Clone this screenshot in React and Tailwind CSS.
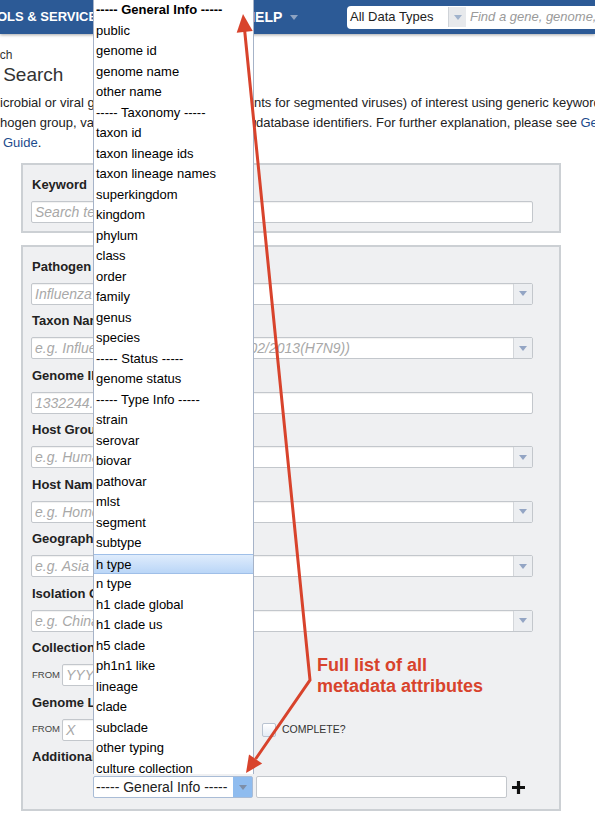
import React from "react";

const RED = "#d8432c";

const metaOptions = [
  "----- General Info -----",
  "public",
  "genome id",
  "genome name",
  "other name",
  "----- Taxonomy -----",
  "taxon id",
  "taxon lineage ids",
  "taxon lineage names",
  "superkingdom",
  "kingdom",
  "phylum",
  "class",
  "order",
  "family",
  "genus",
  "species",
  "----- Status -----",
  "genome status",
  "----- Type Info -----",
  "strain",
  "serovar",
  "biovar",
  "pathovar",
  "mlst",
  "segment",
  "subtype",
  "h type",
  "n type",
  "h1 clade global",
  "h1 clade us",
  "h5 clade",
  "ph1n1 like",
  "lineage",
  "clade",
  "subclade",
  "other typing",
  "culture collection",
  "culture collection id",
];

const fields = [
  { label: "Pathogen Group", placeholder: "Influenza A virus", arrow: true },
  {
    label: "Taxon Name",
    placeholder: "e.g. Influenza A virus (A/Shanghai/02/2013(H7N9))",
    arrow: true,
  },
  { label: "Genome ID", placeholder: "1332244.3" },
  { label: "Host Group", placeholder: "e.g. Human", arrow: true },
  { label: "Host Name", placeholder: "e.g. Homo sapiens", arrow: true },
  { label: "Geographic Group", placeholder: "e.g. Asia", arrow: true },
  { label: "Isolation Country", placeholder: "e.g. China", arrow: true },
];

function Caret({ color = "#93a5c4" }) {
  return (
    <svg width="8" height="5" viewBox="0 0 8 5">
      <path d="M0 0h8L4 5z" fill={color} />
    </svg>
  );
}

function TextBox({ placeholder, arrow, className = "w-[502px]" }) {
  return (
    <div
      className={`h-[22px] flex bg-white border border-[#c3c7cc] rounded-[2px] shadow-[inset_0_1px_1px_rgba(0,0,0,0.06)] ${className}`}
    >
      <span className="flex-1 overflow-hidden whitespace-nowrap pl-[3px] italic text-[14px] leading-[20px] text-[#a8a8a8]">
        {placeholder}
      </span>
      {arrow && (
        <span className="w-[19px] shrink-0 flex items-center justify-center bg-[#eceef1] border-l border-[#d3d6da]">
          <Caret />
        </span>
      )}
    </div>
  );
}

function Label({ children }) {
  return (
    <div className="h-[17px] leading-[17px] pl-[1px] text-[13px] font-bold text-[#222] whitespace-nowrap">
      {children}
    </div>
  );
}

function RangeRow({ from, to }) {
  return (
    <div className="flex items-center w-[231px] shrink-0">
      <span className="w-[31px] pl-[1px] text-[9.5px] text-[#444]">FROM</span>
      <TextBox placeholder={from} className="w-[70px]" />
      <span className="px-[6px] text-[9.5px] text-[#444]">TO</span>
      <TextBox placeholder={to} className="w-[70px]" />
    </div>
  );
}

function MetaList() {
  return (
    <div className="absolute left-[93px] top-0 z-10 w-[161px] h-[774px] overflow-hidden bg-white border-x border-[#a6b3c8]">
      {metaOptions.map((opt, i) => (
        <div
          key={opt}
          className={
            "h-[20.5px] leading-[20.5px] pl-[2px] text-[13px] text-black whitespace-nowrap " +
            (opt === "h type"
              ? "bg-gradient-to-b from-[#dfecfc] to-[#bad6f7] border-y border-[#9fbfe8] leading-[18.5px]"
              : "") +
            (i === 0 ? " font-bold" : "")
          }
        >
          {opt}
        </div>
      ))}
    </div>
  );
}

function Annotation() {
  return (
    <>
      <svg
        className="absolute left-0 top-0 z-20 pointer-events-none"
        width="595"
        height="819"
        viewBox="0 0 595 819"
      >
        <polyline
          points="244.7,31 310,680 255.6,759"
          fill="none"
          stroke={RED}
          strokeWidth="3"
          strokeLinejoin="miter"
        />
        <polygon points="243,14 252.7,31.1 236.7,32.7" fill={RED} />
        <polygon points="246,773 262.2,763.5 249,754.5" fill={RED} />
      </svg>
      <div
        className="absolute left-[317px] top-[655px] z-20 text-[18px] leading-[21px] font-bold text-[#d8432c]"
      >
        Full list of all
        <br />
        metadata attributes
      </div>
    </>
  );
}

export default function App() {
  return (
    <div className="relative w-[595px] h-[819px] overflow-hidden bg-white text-[#222] font-['Liberation_Sans',Arial,Helvetica,sans-serif]">
      {/* top nav */}
      <nav className="relative z-[5] h-[34px] flex items-center bg-[#2c5a96] shadow-[0_1px_3px_rgba(0,0,0,0.35)] font-['Liberation_Sans_Narrow','Arial_Narrow',sans-serif] text-white font-bold text-[14px]">
        <div className="w-[245px] shrink-0 overflow-hidden whitespace-nowrap text-[13px]">
          <span className="-ml-[3px]">OLS &amp; SERVICES</span>
        </div>
        <div className="w-[102px] shrink-0 flex items-center gap-[8px]">
          <span>HELP</span>
          <Caret color="#8ea3c2" />
        </div>
        <div className="h-[23px] w-[320px] shrink-0 flex items-center bg-white rounded-[4px] font-['Liberation_Sans',Arial,sans-serif] font-normal text-[13px]">
          <span className="w-[101px] pl-[3px] text-[#222] whitespace-nowrap">
            All Data Types
          </span>
          <span className="h-[20px] w-[18px] flex items-center justify-center bg-[#e7e9ec] border-l border-[#cfd3d8]">
            <Caret color="#9fb2cc" />
          </span>
          <span className="pl-[4px] italic text-[#9a9a9a] whitespace-nowrap">
            Find a gene, genome, feature...
          </span>
        </div>
      </nav>

      {/* page body, scrolled horizontally */}
      <main className="pt-[13px]">
        <div className="-ml-[75px] whitespace-nowrap text-[12px] leading-[16px] text-[#333]">
          Genome Search
        </div>
        <h1 className="-ml-[75px] whitespace-nowrap text-[19px] leading-[24px] text-[#333]">
          Genome Search
        </h1>
        <div className="mt-[6px] text-[13px] leading-[20px] text-[#222] whitespace-nowrap">
          <div className="flex">
            <span className="w-[254px] shrink-0 overflow-hidden">
              icrobial or viral genomes (or genome segme
            </span>
            <span>nts for segmented viruses) of interest using generic keywords,</span>
          </div>
          <div className="flex">
            <span className="w-[256px] shrink-0 overflow-hidden">
              hogen group, various metadata fields, and/or
            </span>
            <span>
              database identifiers. For further explanation, please see{" "}
              <a className="text-[#1c4b8c]">Genome Search Quick Reference</a>
            </span>
          </div>
          <div className="pl-[3px]">
            <a className="text-[#1c4b8c]">Guide</a>.
          </div>
        </div>

        {/* keyword panel */}
        <section className="mt-[10px] ml-[21px] w-[540px] border-2 border-[#ccd0d4] bg-[#eff0f2] pt-[10.5px] pb-[8.5px] pl-[8px]">
          <Label>Keyword</Label>
          <div className="mt-[8px]">
            <TextBox placeholder="Search terms" />
          </div>
        </section>

        {/* metadata panel */}
        <section className="mt-[12px] ml-[21px] w-[540px] border-2 border-[#ccd0d4] bg-[#eff0f2] pt-[10.5px] pb-[11px] pl-[8px] flex flex-col gap-[7.5px]">
          {fields.map((f) => (
            <div key={f.label}>
              <Label>{f.label}</Label>
              <div className="mt-[8px]">
                <TextBox placeholder={f.placeholder} arrow={f.arrow} />
              </div>
            </div>
          ))}

          <div>
            <Label>Collection Year</Label>
            <div className="mt-[8px] flex items-center">
              <RangeRow from="YYYY" to="YYYY" />
            </div>
          </div>

          <div>
            <Label>Genome Length</Label>
            <div className="mt-[8px] flex items-center">
              <RangeRow from="X" to="Y" />
              <span className="w-[14px] h-[14px] rounded-[2px] border border-[#b9c3d1] bg-gradient-to-b from-white to-[#e4ebf5]" />
              <span className="ml-[6px] text-[10.5px] text-[#333]">COMPLETE?</span>
            </div>
          </div>

          <div>
            <Label>Additional Metadata</Label>
            <div className="mt-[11px] flex items-center">
              <div className="ml-[62px] w-[160px] h-[22px] flex bg-white border border-[#a9bcd6] rounded-[2px]">
                <span className="flex-1 pl-[2px] text-[14px] leading-[20px] text-[#222] whitespace-nowrap overflow-hidden">
                  ----- General Info -----
                </span>
                <span className="w-[19px] flex items-center justify-center bg-[#8fbcef]">
                  <Caret color="#7d8ea8" />
                </span>
              </div>
              <div className="ml-[3px] w-[251px] h-[22px] bg-white border border-[#c3c7cc] rounded-[2px]" />
              <svg className="ml-[4px]" width="15" height="15" viewBox="0 0 15 15">
                <path d="M7.5 1v13M1 7.5h13" stroke="#111" strokeWidth="3.2" />
              </svg>
            </div>
          </div>
        </section>
      </main>

      <MetaList />
      <Annotation />
    </div>
  );
}
